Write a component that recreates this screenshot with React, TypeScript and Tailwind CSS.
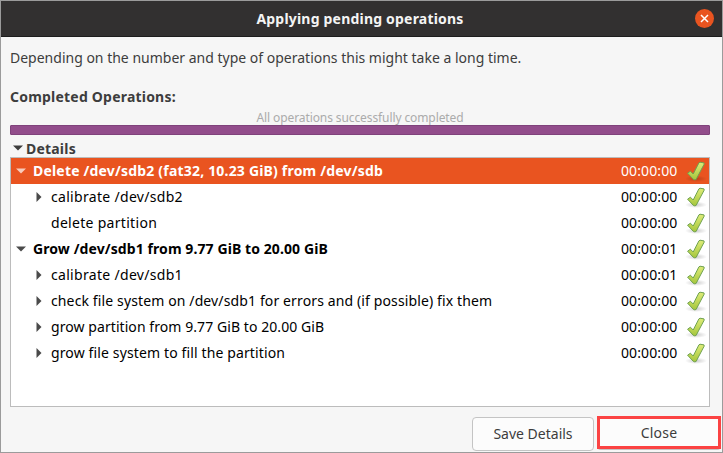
type Operation = {
  label: string;
  time: string;
  kind: "open" | "closed" | "leaf";
  selected?: boolean;
  tracking: string;
};

const operations: Operation[] = [
  { label: "Delete /dev/sdb2 (fat32, 10.23 GiB) from /dev/sdb", time: "00:00:00", kind: "open", selected: true, tracking: "tracking-[0.19px]" },
  { label: "calibrate /dev/sdb2", time: "00:00:00", kind: "closed", tracking: "tracking-[0.31px]" },
  { label: "delete partition", time: "00:00:00", kind: "leaf", tracking: "tracking-[0.3px]" },
  { label: "Grow /dev/sdb1 from 9.77 GiB to 20.00 GiB", time: "00:00:01", kind: "open", tracking: "tracking-[0.09px]" },
  { label: "calibrate /dev/sdb1", time: "00:00:01", kind: "closed", tracking: "tracking-[0.31px]" },
  { label: "check file system on /dev/sdb1 for errors and (if possible) fix them", time: "00:00:00", kind: "closed", tracking: "tracking-[0.125px]" },
  { label: "grow partition from 9.77 GiB to 20.00 GiB", time: "00:00:00", kind: "closed", tracking: "tracking-[0.07px]" },
  { label: "grow file system to fill the partition", time: "00:00:00", kind: "closed", tracking: "tracking-[0.13px]" },
];

function DownArrow({ className }: { className: string }) {
  return (
    <svg className={className} width="10" height="6" viewBox="0 0 10 6">
      <path d="M0 .5h10L5 5.5z" fill="currentColor" />
    </svg>
  );
}

function RightArrow() {
  return (
    <svg className="text-[#4a4a4a]" width="6" height="10" viewBox="0 0 6 10">
      <path d="M.5 0v10L5.5 5z" fill="currentColor" />
    </svg>
  );
}

function Check() {
  return (
    <svg width="24" height="24" viewBox="0 0 24 24" className="shrink-0">
      <defs>
        <linearGradient id="leaf" x1="0" y1="0" x2="0" y2="1">
          <stop offset="0" stopColor="#dfec78" />
          <stop offset="1" stopColor="#a5c63c" />
        </linearGradient>
        <radialGradient id="shade">
          <stop offset="0" stopColor="#000" stopOpacity=".2" />
          <stop offset="1" stopColor="#000" stopOpacity="0" />
        </radialGradient>
      </defs>
      <ellipse cx="11" cy="19.8" rx="11" ry="3.2" fill="url(#shade)" />
      <path
        d="M2.6 14.2 5.4 12.2 8.2 15 13.9 3.9 15 3.2 19 3.9 19.2 5.1 11 20.6 9.2 20.8 8.2 20.2z"
        fill="url(#leaf)"
        stroke="#6fa24f"
        strokeWidth="1"
        strokeLinejoin="round"
      />
    </svg>
  );
}

function Row({ op }: { op: Operation }) {
  const top = op.kind === "open";
  return (
    <div className={`flex h-[26px] items-center ${op.selected ? "bg-[#e95420] text-white" : "text-black"}`}>
      <div className={top ? "flex w-[22px] pl-[5px]" : "flex w-10 pl-[25px]"}>
        {op.kind === "open" && <DownArrow className={op.selected ? "text-[#f8cbbb]" : "text-[#4a4a4a]"} />}
        {op.kind === "closed" && <RightArrow />}
      </div>
      <span className={`flex-1 ${op.tracking} ${top ? "font-bold" : ""}`}>{op.label}</span>
      <span className="mr-[7px] w-[57px] tracking-[0.1px]">{op.time}</span>
      <Check />
    </div>
  );
}

export default function App() {
  return (
    <div className="flex h-[453px] w-[723px] flex-col overflow-hidden whitespace-nowrap border border-[#9b9b9b] bg-[#f6f6f6] font-['Noto_Sans',sans-serif] text-[14px] leading-[20px] text-[#3d3d3d]">
      <header className="flex h-9 shrink-0 items-center border-b border-[#1d1d1d] bg-[#323030] text-[#f4f4f4]">
        <h1 className="flex-1 pl-[24px] text-center font-bold tracking-[0.2px]">Applying pending operations</h1>
        <button className="mr-[8px] flex h-[19px] w-[19px] items-center justify-center rounded-full bg-[#e95420]">
          <svg width="9" height="9" viewBox="0 0 9 9">
            <path d="M1 1l7 7M8 1L1 8" stroke="#fff" strokeWidth="1.5" />
          </svg>
        </button>
      </header>
      <main className="flex flex-1 flex-col pl-[9px] pr-[12px]">
        <p className="mt-[11px]">Depending on the number and type of operations this might take a long time.</p>
        <p className="mt-[19px] font-bold tracking-[0.21px]">Completed Operations:</p>
        <p className="mt-px h-[17px] text-center text-[12px] leading-[19px] tracking-[-0.1px] text-[#ababab]">All operations successfully completed</p>
        <div className="h-[10px] rounded-[1px] border border-[#7f427b] bg-[#924d8b]" />
        <div className="mt-[4px] flex h-[18px] items-center pl-[3px] font-bold">
          <DownArrow className="mr-[3px] text-[#3d3d3d]" />
          <span className="pt-px tracking-[0.2px]">Details</span>
        </div>
        <section className="h-[250px] w-[700px] border border-[#bcbcbc] bg-white">
          {operations.map((op) => (
            <Row key={op.label} op={op} />
          ))}
        </section>
        <footer className="mt-[9px] flex w-[711px]">
          <button className="ml-[462px] mt-px h-[34px] w-[122px] rounded-[4px] border border-[#c4c4c4] bg-[#fcfcfc]">Save Details</button>
          <div className="ml-[3px] h-[34px] w-[124px] rounded-b-[4px] border-b border-[#c4c4c4]">
            <button className="h-[33px] w-full border-[3px] border-[#fb4343] bg-[#fcfcfc] pt-px tracking-[0.2px]">Close</button>
          </div>
        </footer>
      </main>
    </div>
  );
}
